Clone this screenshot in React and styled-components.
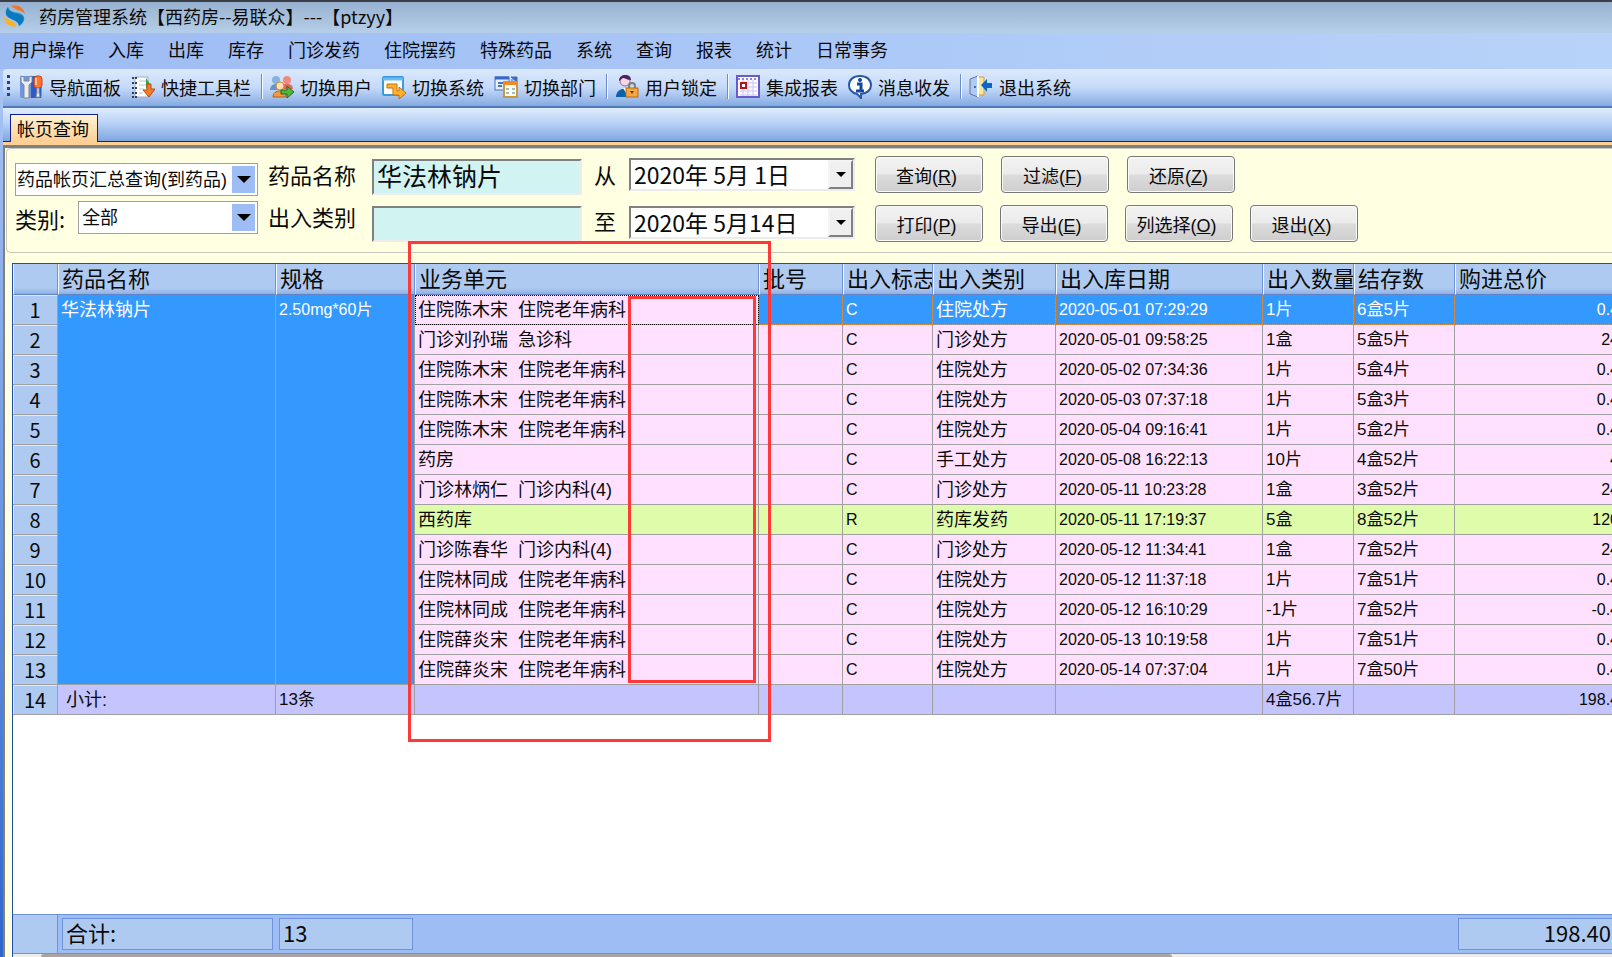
import React, { useState } from "react";
import styled, { createGlobalStyle } from "styled-components";

const GlobalStyle = createGlobalStyle`
* {
  box-sizing: border-box;
}
body {
  margin: 0;
  background: #ffffe1;
  color: #0a0a0a;
  font-family: "Liberation Sans", "Noto Sans CJK SC", sans-serif;
  font-size: 18px;
}
button, input, select {
  font-family: inherit;
  color: inherit;
  margin: 0;
}
`;

const cjk = `"Noto Sans CJK SC", sans-serif`;

const Window = styled.div`
  display: flex;
  flex-direction: column;
  height: 100vh;
  min-height: 800px;
  overflow: hidden;
  font-family: ${cjk};
`;

const TitleBar = styled.header`
  display: flex;
  align-items: center;
  gap: 13px;
  height: 33px;
  padding: 0 0 4px 4px;
  border-top: 2px solid #3c4046;
  background: linear-gradient(#97b1d0, #b5cfe9);
  white-space: nowrap;
`;

const MenuBar = styled.nav`
  display: flex;
  align-items: center;
  gap: 24px;
  height: 36px;
  padding: 0 0 4px 12px;
  background: linear-gradient(90deg, #9ebcf4, #b8d3f9);
`;

const MenuItem = styled.button`
  padding: 0;
  border: 0;
  background: none;
  font-size: 18px;
  line-height: 24px;
  white-space: nowrap;
`;

const Body = styled.div`
  display: flex;
  flex: 1;
  flex-direction: column;
  min-height: 0;
  padding-left: 3px;
  background: linear-gradient(#a9c6f5, #2e66cc);
`;

const ToolBar = styled.div`
  display: flex;
  align-items: center;
  height: 39px;
  padding: 0 0 2px 4px;
  border-bottom: 2px solid #5079b8;
  border-radius: 4px 0 0 0;
  background: linear-gradient(#dbe9fc, #c5dafa 50%, #84aae2);
`;

const Grip = styled.div`
  width: 3px;
  height: 23px;
  margin-right: 9px;
  background: repeating-linear-gradient(#27427f 0 3px, transparent 3px 6px);
`;

const Tool = styled.button`
  display: flex;
  align-items: center;
  gap: 6px;
  margin-right: 10px;
  padding: 0;
  border: 0;
  background: none;
  font-size: 18px;
  line-height: 24px;
  white-space: nowrap;
`;

const Separator = styled.div`
  width: 2px;
  height: 25px;
  margin-right: 7px;
  border-left: 1px solid #6a8ccb;
  background: #f4f8ff;
`;

const TabStrip = styled.div`
  display: flex;
  align-items: flex-end;
  height: 34px;
  padding-left: 7px;
  border-bottom: 1px solid #10228c;
  background: linear-gradient(#dfecfd, #b9d2f7 45%, #7fa5e0);
`;

const Tab = styled.button`
  height: 28px;
  margin-bottom: -1px;
  padding: 0 8px 2px 6px;
  border: 1px solid #10228c;
  border-bottom: 0;
  background: linear-gradient(#fff3d4, #ffcf93);
  font-size: 18px;
  line-height: 24px;
`;

const Sheet = styled.main`
  display: flex;
  flex: 1;
  flex-direction: column;
  min-height: 0;
  border-top: 3px solid #ffcf93;
`;

const Page = styled.div`
  display: flex;
  flex: 1;
  flex-direction: column;
  min-height: 0;
  padding-left: 1px;
  border: 2px solid #808080;
  border-width: 3px 0 0 2px;
  background: #ffffe1;
`;

const Filters = styled.form`
  display: flex;
  height: 105px;
  padding-left: 8px;
  border: 1px solid #c8c8c0;
  border-right: 0;
  border-radius: 5px 0 0 5px;
`;

const Stack = styled.div`
  display: flex;
  flex: none;
  flex-direction: column;
  width: ${({ $width }) => $width};
  margin-right: ${({ $after }) => $after || 0}px;
  padding-top: ${({ $top }) => $top}px;
  gap: ${({ $gap }) => $gap}px;
`;

const Row = styled.div`
  display: flex;
  gap: ${({ $gap }) => $gap || 0}px;
`;

const Label = styled.label`
  font-size: 22px;
  line-height: 34px;
  white-space: nowrap;
`;

const Combo = styled.div`
  position: relative;
  flex: 1;
  height: 33px;
  border: 1px solid #a0a0a0;
  background: #fff;
`;

const Select = styled.select`
  width: 100%;
  height: 100%;
  padding: 0 28px 0 ${({ $pad }) => $pad}px;
  border: 0;
  appearance: none;
  background: none;
  font-family: "Liberation Sans", ${cjk};
  font-size: 18px;
`;

const ComboArrow = styled.span`
  position: absolute;
  top: 2px;
  right: 2px;
  display: grid;
  place-items: center;
  width: 23px;
  height: 27px;
  background: #9fbdf5;
  pointer-events: none;
`;

const bevel = `
  border: 2px solid;
  border-color: #808080 #ececec #ececec #808080;
`;

const TextBox = styled.input`
  width: 210px;
  height: 36px;
  padding: 0 3px 4px;
  ${bevel}
  background: #d1f3f1;
  font-size: 25px;
`;

const DateBox = styled.div`
  display: flex;
  height: 33px;
  ${bevel}
  background: #fff;

  input {
    flex: 1;
    min-width: 0;
    padding: 0 3px 2px;
    border: 0;
    background: none;
    font-size: 23px;
  }

  button {
    width: 25px;
    padding: 0;
    border: 2px solid;
    border-color: #f4f4f4 #808080 #808080 #f4f4f4;
    background: #efefef;
    line-height: 0;
  }
`;

const Button = styled.button`
  width: 108px;
  height: 37px;
  padding: 0 5px 0 0;
  border: 1px solid #787878;
  border-radius: 4px;
  background: linear-gradient(#f3f3f3, #ebebeb 49%, #dcdcdc 51%, #cecece);
  box-shadow: inset 0 0 0 1px #fafafa;
  font-family: "Liberation Sans", ${cjk};
  font-size: 18px;
`;

const Frame = styled.section`
  position: relative;
  display: flex;
  flex: 1;
  flex-direction: column;
  min-height: 0;
  margin: 10px 0 0 6px;
  border: 1px solid #1f4fa8;
  border-width: 1px 0 0 1px;
  background: #fff;
`;

const Scroller = styled.div`
  flex: 1;
  min-height: 0;
  overflow: hidden;
`;

const Table = styled.table`
  width: 1611px;
  border-spacing: 0;
  table-layout: fixed;
  font-family: "Liberation Sans", ${cjk};
`;

const HeadCell = styled.th`
  height: 31px;
  padding: 0 3px 3px;
  overflow-x: clip;
  border-left: 1px solid #f0f6ff;
  border-right: 1px solid #6f93d8;
  border-bottom: 1px solid #5f83c4;
  background: linear-gradient(#afcaf0 80%, #8fb0e6);
  font-family: ${cjk};
  font-size: 22px;
  font-weight: 400;
  line-height: 27px;
  text-align: left;
  white-space: nowrap;
`;

const RowHead = styled.th`
  height: 30px;
  padding: 0;
  border-right: 1px solid #a0a0a0;
  border-bottom: 1px solid #a0a0a0;
  background: #afcaf0;
  box-shadow: inset 1px 1px #dce9fb;
  font-family: ${cjk};
  font-size: 20px;
  font-weight: 400;
  line-height: 29px;
  text-align: center;
`;

const tones = {
  out: "#ffe1ff",
  in: "#dffcaa",
  picked: "#3399ff",
  total: "#c4c4ff",
};

const Cell = styled.td`
  height: 30px;
  padding: 1px 4px 0 3px;
  overflow: hidden;
  border-right: 1px solid #a0a0a0;
  border-bottom: 1px solid #a0a0a0;
  background: ${({ $tone }) => tones[$tone]};
  color: ${({ $tone }) => ($tone === "picked" ? "#fff" : "#0a0a0a")};
  font-size: ${({ $size }) => $size || 18}px;
  line-height: 28px;
  text-align: ${({ $right }) => ($right ? "right" : "left")};
  vertical-align: top;
  white-space: pre;
  outline: ${({ $dots }) => ($dots ? `1px dotted ${$dots}` : "none")};
  outline-offset: -1px;
`;

const Footer = styled.div`
  display: flex;
  flex: none;
  align-items: center;
  height: 40px;
  overflow: hidden;
  border-top: 1px solid #6f93d8;
  border-bottom: 1px solid #6f93d8;
  background: #9fbdf5;
  font-size: 22px;
`;

const FooterHead = styled.div`
  flex: none;
  align-self: stretch;
  width: 45px;
  margin-right: 4px;
  border-right: 1px solid #6f93d8;
  background: #afcaf0;
`;

const Total = styled.output`
  flex: none;
  width: ${({ $width }) => $width}px;
  height: 32px;
  margin-right: 6px;
  margin-left: ${({ $before }) => $before || 0}px;
  padding: 0 3px;
  border: 1px solid #6f93d8;
  background: #afcaf0;
  line-height: 27px;
  text-align: ${({ $right }) => ($right ? "right" : "left")};
`;

const ScrollTrack = styled.div`
  flex: none;
  height: 3px;
  padding-left: 28px;
  background: #ececec;
`;

const ScrollThumb = styled.div`
  width: 72%;
  height: 3px;
  border-radius: 3px 3px 0 0;
  background: #a8a4a4;
`;

// red review marks that lie over the grid
const Mark = styled.div`
  position: absolute;
  top: ${({ $top }) => $top}px;
  left: ${({ $left }) => $left}px;
  width: ${({ $width }) => $width}px;
  height: ${({ $height }) => $height}px;
  border: 3px solid #ff3838;
  pointer-events: none;
`;

const Caret = ({ width = 14 }) => (
  <svg width={width} height={width / 2} viewBox="0 0 14 7">
    <path d="M0 0h14L7 7z" fill="#000" />
  </svg>
);

const Logo = () => (
  <svg width="22" height="22" viewBox="0 0 22 22">
    <path d="M7 1C13-1 20 2 21 9c-3-4-8-3-14-8z" fill="#ee7624" />
    <path d="M4 2C-1 8 3 13 9 14c4 1 6 3 6 7 7-4 7-11 0-13C9 7 5 6 4 2z" fill="#1593d6" />
    <path d="M4 2c0 7 13 6 15 10 1 3-1 6-4 9 0-7-14-6-13-14z" fill="#0b79bd" />
    <path d="M0 11c2 5 9 3 13 10C7 23 0 19 0 11z" fill="#fbb31b" />
  </svg>
);

const icons = {
  panel: (
    <>
      <rect x="1" y="1" width="22" height="22" rx="2" fill="#6f95e0" />
      <path d="M12 1h10v22H12z" fill="#2f5cc0" />
      <path d="M2 1v6l3 3v13h5V10l3-3V1l-3 1v4H5V2z" fill="#ececec" stroke="#7d8796" />
      <rect x="15" y="1" width="8" height="12" rx="3" fill="#ff7430" stroke="#c74312" />
      <path d="M17 3v7" stroke="#ffc39c" strokeWidth="2" />
      <path d="M18 13h2v5l1 4h-4l1-4z" fill="#eee" stroke="#8b93a5" />
    </>
  ),
  notes: (
    <>
      <path d="M4 2h13v20H4z" fill="#fff" stroke="#a5adb8" />
      <path d="M1 3h5M1 8h5M1 13h5M1 18h5M1 22h5" stroke="#333f55" strokeWidth="2" strokeDasharray="2 1" />
      <path d="M8 6h7M8 10h7M8 14h5M8 18h4" stroke="#bdc6d2" />
      <path d="M15 3l4 6-4 5z" fill="#3ba04a" />
      <path d="M16 9h4v5h4l-6 8-6-7h4z" fill="#f57b25" stroke="#b84c10" />
    </>
  ),
  users: (
    <>
      <circle cx="6" cy="5" r="4" fill="#86b3e2" />
      <circle cx="17" cy="5" r="4" fill="#f08a80" />
      <path d="M0 15c0-8 12-8 12 0z" fill="#5f96cf" />
      <path d="M11 14c0-7 12-7 12 0z" fill="#e8675c" />
      <circle cx="10" cy="11" r="4" fill="#ffe2bc" stroke="#d98935" />
      <path d="M3 22c0-8 13-8 13 0z" fill="#f49a3d" stroke="#b75e16" />
      <path d="M11 15h6v-4l7 6-7 6v-4h-6z" fill="#4fb83c" stroke="#216b18" />
    </>
  ),
  system: (
    <>
      <rect x="1" y="2" width="20" height="18" rx="1" fill="#fff" stroke="#3b9ade" strokeWidth="2" />
      <path d="M1 4h20" stroke="#65bdf1" strokeWidth="3" />
      <path d="M5 9h10v7h2v-4l7 6-7 6v-4h-6v-7H5z" fill="#ffb22c" stroke="#c66e0b" />
    </>
  ),
  dept: (
    <>
      <rect x="1" y="2" width="14" height="13" fill="#e6eefc" stroke="#4a73c5" />
      <path d="M1 3h14" stroke="#3768c9" strokeWidth="3" />
      <path d="M4 8h5M4 11h4" stroke="#4a73c5" strokeWidth="2" />
      <path d="M17 2h6v5zM17 5h2" fill="#4569b8" stroke="#4569b8" />
      <rect x="10" y="8" width="13" height="14" fill="#fff" stroke="#c49a3c" strokeWidth="2" />
      <path d="M9 8h15" stroke="#f28a24" strokeWidth="4" />
      <path d="M12 14h3M18 14h3M12 18h3M18 18h3" stroke="#9fc0a5" strokeWidth="2" />
    </>
  ),
  lock: (
    <>
      <circle cx="10" cy="6" r="5" fill="#f4d7e4" stroke="#8f6e92" />
      <path d="M4 6c0-8 12-8 12-1-4 0-6-2-8-2z" fill="#4a235f" />
      <path d="M1 22c0-11 17-11 17 0z" fill="#0b62a8" />
      <path d="M8 13h4l-1 5z" fill="#fff" />
      <path d="M14 14v-3c0-4 6-4 6 0v3" fill="none" stroke="#7d7d7d" strokeWidth="2" />
      <rect x="11" y="13" width="12" height="9" fill="#f8a640" stroke="#b96a12" />
      <path d="M15 16h4l-2 3z" fill="#6d3b05" />
    </>
  ),
  report: (
    <>
      <rect x="1" y="1" width="22" height="21" fill="#fbfaff" stroke="#6a5cc8" strokeWidth="2" />
      <path d="M2 4h20" stroke="#8f85dd" strokeWidth="2" strokeDasharray="2 2" />
      <path d="M4 8h17M4 12h17M4 16h17M4 20h17M7 5v16M12 5v16M17 5v16" stroke="#ccc5f2" />
      <rect x="5" y="8" width="5" height="5" fill="#fff" stroke="#b3161b" strokeWidth="2" />
    </>
  ),
  message: (
    <>
      <path d="M12 1C5 1 1 5 1 10s4 8 8 9l4 4v-4c6-1 10-4 10-9s-4-9-11-9z" fill="#fff" stroke="#2a57a5" strokeWidth="2" />
      <circle cx="12" cy="5" r="2" fill="#1346a0" />
      <path d="M9 9h4v7M8 16h8" fill="none" stroke="#1346a0" strokeWidth="3" />
    </>
  ),
  exit: (
    <>
      <path d="M9 2h6v18H9z" fill="#ffe49b" stroke="#c9a03f" />
      <path d="M1 4l8-3v21l-8-3z" fill="#a9cdf5" stroke="#6e6f9c" />
      <path d="M9 1v21" stroke="#fff" strokeWidth="2" />
      <circle cx="6" cy="12" r="1" fill="#3b4a78" />
      <path d="M12 10l6-6v4h5v5h-5v4z" fill="#0b68c9" />
    </>
  ),
};

const menus = ["用户操作", "入库", "出库", "库存", "门诊发药", "住院摆药", "特殊药品", "系统", "查询", "报表", "统计", "日常事务"];

const tools = [
  ["panel", "导航面板"],
  ["notes", "快捷工具栏"],
  null,
  ["users", "切换用户"],
  ["system", "切换系统"],
  ["dept", "切换部门"],
  null,
  ["lock", "用户锁定"],
  null,
  ["report", "集成报表"],
  ["message", "消息收发"],
  null,
  ["exit", "退出系统"],
];

const columns = [
  ["", 45],
  ["药品名称", 218],
  ["规格", 139],
  ["业务单元", 344],
  ["批号", 84],
  ["出入标志", 90],
  ["出入类别", 123],
  ["出入库日期", 207],
  ["出入数量", 91],
  ["结存数", 101],
  ["购进总价", 169],
];

// unit, flag, type, date, quantity, balance, price
const records = [
  ["住院陈木宋  住院老年病科", "C", "住院处方", "2020-05-01 07:29:29", "1片", "6盒5片", "0.4"],
  ["门诊刘孙瑞  急诊科", "C", "门诊处方", "2020-05-01 09:58:25", "1盒", "5盒5片", "24"],
  ["住院陈木宋  住院老年病科", "C", "住院处方", "2020-05-02 07:34:36", "1片", "5盒4片", "0.4"],
  ["住院陈木宋  住院老年病科", "C", "住院处方", "2020-05-03 07:37:18", "1片", "5盒3片", "0.4"],
  ["住院陈木宋  住院老年病科", "C", "住院处方", "2020-05-04 09:16:41", "1片", "5盒2片", "0.4"],
  ["药房", "C", "手工处方", "2020-05-08 16:22:13", "10片", "4盒52片", "4"],
  ["门诊林炳仁  门诊内科(4)", "C", "门诊处方", "2020-05-11 10:23:28", "1盒", "3盒52片", "24"],
  ["西药库", "R", "药库发药", "2020-05-11 17:19:37", "5盒", "8盒52片", "120"],
  ["门诊陈春华  门诊内科(4)", "C", "门诊处方", "2020-05-12 11:34:41", "1盒", "7盒52片", "24"],
  ["住院林同成  住院老年病科", "C", "住院处方", "2020-05-12 11:37:18", "1片", "7盒51片", "0.4"],
  ["住院林同成  住院老年病科", "C", "住院处方", "2020-05-12 16:10:29", "-1片", "7盒52片", "-0.4"],
  ["住院薛炎宋  住院老年病科", "C", "住院处方", "2020-05-13 10:19:58", "1片", "7盒51片", "0.4"],
  ["住院薛炎宋  住院老年病科", "C", "住院处方", "2020-05-14 07:37:04", "1片", "7盒50片", "0.4"],
];

const DateField = ({ id, value }) => (
  <DateBox>
    <input id={id} defaultValue={value} />
    <button type="button" aria-label="▼">
      <Caret width={10} />
    </button>
  </DateBox>
);

const FilterPanel = () => {
  const [drug, setDrug] = useState("华法林钠片");

  return (
    <Filters onSubmit={(e) => e.preventDefault()}>
      <Stack $width="243px" $after={10} $top={14} $gap={5}>
        <Row>
          <Combo>
            <Select $pad={1} aria-label="帐页查询">
              <option>药品帐页汇总查询(到药品)</option>
            </Select>
            <ComboArrow><Caret /></ComboArrow>
          </Combo>
        </Row>
        <Row $gap={13}>
          <Label htmlFor="kind">类别:</Label>
          <Combo>
            <Select id="kind" $pad={3}>
              <option>全部</option>
            </Select>
            <ComboArrow><Caret /></ComboArrow>
          </Combo>
        </Row>
      </Stack>
      <Stack $width="104px" $top={8} $gap={8}>
        <Label htmlFor="drug">药品名称</Label>
        <Label htmlFor="inout">出入类别</Label>
      </Stack>
      <Stack $width="222px" $top={10} $gap={11}>
        <TextBox id="drug" value={drug} onChange={(e) => setDrug(e.target.value)} />
        <TextBox id="inout" />
      </Stack>
      <Stack $width="35px" $top={8} $gap={12}>
        <Label htmlFor="from">从</Label>
        <Label htmlFor="to">至</Label>
      </Stack>
      <Stack $width="226px" $after={20} $top={9} $gap={15}>
        <DateField id="from" value="2020年 5月 1日" />
        <DateField id="to" value="2020年 5月14日" />
      </Stack>
      <Stack $width="auto" $top={7} $gap={12}>
        <Row $gap={18}>
          <Button>查询(<u>R</u>)</Button>
          <Button>过滤(<u>F</u>)</Button>
          <Button>还原(<u>Z</u>)</Button>
        </Row>
        <Row $gap={17}>
          <Button>打印(<u>P</u>)</Button>
          <Button>导出(<u>E</u>)</Button>
          <Button>列选择(<u>O</u>)</Button>
          <Button>退出(<u>X</u>)</Button>
        </Row>
      </Stack>
    </Filters>
  );
};

const Grid = () => (
  <Table>
    <colgroup>
      {columns.map(([name, width]) => (
        <col key={name} style={{ width }} />
      ))}
    </colgroup>
    <thead>
      <tr>
        {columns.map(([name]) => (
          <HeadCell key={name}>{name}</HeadCell>
        ))}
      </tr>
    </thead>
    <tbody>
      {records.map(([unit, flag, type, date, qty, left, price], i) => {
        const base = flag === "R" ? "in" : "out";
        const tone = i === 0 ? "picked" : base;
        const dots = i === 0 ? "#c87a30" : "";
        return (
          <tr key={date}>
            <RowHead>{i + 1}</RowHead>
            {i === 0 && (
              <>
                <Cell $tone="picked" rowSpan={13}>华法林钠片</Cell>
                <Cell $tone="picked" $size={16} rowSpan={13}>2.50mg*60片</Cell>
              </>
            )}
            <Cell $tone={base} $dots={i === 0 ? "#000" : ""}>{unit}</Cell>
            <Cell $tone={tone} $dots={dots} />
            <Cell $tone={tone} $dots={dots} $size={16}>{flag}</Cell>
            <Cell $tone={tone} $dots={dots}>{type}</Cell>
            <Cell $tone={tone} $dots={dots} $size={16}>{date}</Cell>
            <Cell $tone={tone} $dots={dots} $size={17}>{qty}</Cell>
            <Cell $tone={tone} $dots={dots} $size={17}>{left}</Cell>
            <Cell $tone={tone} $dots={dots} $size={16} $right>{price}</Cell>
          </tr>
        );
      })}
      <tr>
        <RowHead>14</RowHead>
        <Cell $tone="total">&nbsp;小计:</Cell>
        <Cell $tone="total" $size={17}>13条</Cell>
        <Cell $tone="total" />
        <Cell $tone="total" />
        <Cell $tone="total" />
        <Cell $tone="total" />
        <Cell $tone="total" />
        <Cell $tone="total" $size={17}>4盒56.7片</Cell>
        <Cell $tone="total" />
        <Cell $tone="total" $size={16} $right>198.4</Cell>
      </tr>
    </tbody>
  </Table>
);

const App = () => {
  return (
    <Window>
      <GlobalStyle />
      <TitleBar>
        <Logo />
        药房管理系统【西药房--易联众】---【ptzyy】
      </TitleBar>
      <MenuBar>
        {menus.map((name) => (
          <MenuItem key={name}>{name}</MenuItem>
        ))}
      </MenuBar>
      <Body>
        <ToolBar>
          <Grip />
          {tools.map((tool, i) =>
            tool ? (
              <Tool key={i}>
                <svg width="24" height="24" viewBox="0 0 24 24">{icons[tool[0]]}</svg>
                {tool[1]}
              </Tool>
            ) : (
              <Separator key={i} />
            )
          )}
        </ToolBar>
        <TabStrip>
          <Tab>帐页查询</Tab>
        </TabStrip>
        <Sheet>
          <Page>
            <FilterPanel />
            <Frame>
              <Scroller>
                <Grid />
              </Scroller>
              <Footer>
                <FooterHead />
                <Total $width={211}>合计:</Total>
                <Total $width={134}>13</Total>
                <Total $width={157} $before={1039} $right>198.40</Total>
              </Footer>
              <ScrollTrack>
                <ScrollThumb />
              </ScrollTrack>
              <Mark $top={-23} $left={395} $width={363} $height={501} />
              <Mark $top={32} $left={615} $width={128} $height={387} />
            </Frame>
          </Page>
        </Sheet>
      </Body>
    </Window>
  );
};

export default App;
